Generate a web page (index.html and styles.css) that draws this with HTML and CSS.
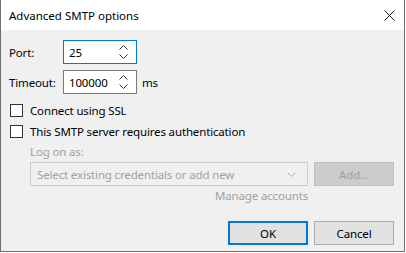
FILE: index.html
```html
<!DOCTYPE html>
<html>
<head>
<meta charset="utf-8">
<link rel="stylesheet" href="styles.css">
</head>
<body>
<div class="window">
  <div class="titlebar">
    <span class="title">Advanced SMTP options</span>
    <svg class="close" width="11" height="11" viewBox="0 0 11 11"><path d="M0.5 0.5 L10.5 10.5 M10.5 0.5 L0.5 10.5" stroke="#1a1a1a" stroke-width="1" fill="none"/></svg>
  </div>
  <div class="content">
    <div class="field-row">
      <span class="field-label">Port:</span>
      <div class="spin focused">
        <span class="spin-value">25</span>
        <span class="spin-arrows">
          <svg width="9" height="5" viewBox="0 0 9 5"><path d="M0.5 4.5 L4.5 0.5 L8.5 4.5" stroke="#333" fill="none"/></svg>
          <svg width="9" height="5" viewBox="0 0 9 5"><path d="M0.5 0.5 L4.5 4.5 L8.5 0.5" stroke="#333" fill="none"/></svg>
        </span>
      </div>
    </div>
    <div class="field-row second">
      <span class="field-label">Timeout:</span>
      <div class="spin">
        <span class="spin-value">100000</span>
        <span class="spin-arrows">
          <svg width="9" height="5" viewBox="0 0 9 5"><path d="M0.5 4.5 L4.5 0.5 L8.5 4.5" stroke="#333" fill="none"/></svg>
          <svg width="9" height="5" viewBox="0 0 9 5"><path d="M0.5 0.5 L4.5 4.5 L8.5 0.5" stroke="#333" fill="none"/></svg>
        </span>
      </div>
      <span class="unit">ms</span>
    </div>
    <label class="check-row first-check"><span class="box"></span><span>Connect using SSL</span></label>
    <label class="check-row"><span class="box"></span><span>This SMTP server requires authentication</span></label>
    <div class="auth">
      <div class="logon">Log on as:</div>
      <div class="combo-row">
        <div class="combo">
          <span>Select existing credentials or add new</span>
          <svg width="9" height="5" viewBox="0 0 9 5"><path d="M0.5 0.5 L4.5 4.5 L8.5 0.5" stroke="#b0b0b0" fill="none"/></svg>
        </div>
        <div class="btn disabled">Add...</div>
      </div>
      <div class="manage">Manage accounts</div>
    </div>
    <div class="actions">
      <div class="btn default">OK</div>
      <div class="btn">Cancel</div>
    </div>
  </div>
</div>
</body>
</html>
```
FILE: styles.css
```css
* { box-sizing: border-box; }
html, body { margin: 0; padding: 0; background: #ffffff; }
body {
  font-family: "Noto Sans", "Open Sans", sans-serif;
  font-size: 11.5px;
  letter-spacing: -0.15px;
  color: #000;
}
.window {
  width: 405px;
  height: 252px;
  border: 1px solid #6f6f6f;
  border-top: none;
  background: #f0f0f0;
  display: flex;
  flex-direction: column;
}
.titlebar {
  height: 30px;
  background: #ffffff;
  display: flex;
  align-items: center;
  justify-content: space-between;
  padding: 0 9px 0 8px;
}
.title { font-size: 11.5px; letter-spacing: 0; color: #000; }
.close { display: block; margin-top: 1px; }
.content {
  padding: 10px 10px 0 8px;
  display: flex;
  flex-direction: column;
  flex: 1;
}
.field-row {
  display: flex;
  align-items: center;
  height: 24px;
}
.field-row.second { margin-top: 6px; height: 24px; }
.field-label { width: 54px; }
.spin {
  width: 74px;
  height: 24px;
  border: 1px solid #7a7a7a;
  background: #fff;
  display: flex;
  align-items: center;
  justify-content: space-between;
  padding: 0 8px 0 5px;
}
.spin.focused { border-color: #0078d7; }
.spin-arrows {
  display: flex;
  flex-direction: column;
  gap: 4px;
}
.spin-arrows svg { display: block; }
.unit { margin-left: 5px; }
.check-row {
  display: flex;
  align-items: center;
  height: 21px;
  padding-left: 1px;
}
.first-check { margin-top: 6px; }
.box {
  width: 13px;
  height: 13px;
  border: 1px solid #333;
  background: #fff;
  margin-right: 7px;
}
.auth {
  padding-left: 21px;
  display: flex;
  flex-direction: column;
}
.logon {
  color: #a0a0a0;
  height: 20px;
  line-height: 20px;
  margin-top: 0;
}
.combo-row {
  display: flex;
  gap: 6px;
  height: 24px;
}
.combo {
  width: 278px;
  height: 24px;
  border: 1px solid #cccccc;
  background: #f0f0f0;
  color: #a0a0a0;
  display: flex;
  align-items: center;
  justify-content: space-between;
  padding: 0 11px 0 6px;
}
.combo svg { display: block; }
.btn {
  width: 80px;
  height: 24px;
  border: 1px solid #adadad;
  background: #e1e1e1;
  display: flex;
  align-items: center;
  justify-content: center;
}
.btn.disabled {
  background: #cccccc;
  border-color: #bfbfbf;
  color: #a0a0a0;
}
.btn.default {
  border: 2px solid #0078d7;
}
.manage {
  width: 278px;
  text-align: right;
  color: #a0a0a0;
  height: 22px;
  line-height: 20px;
}
.actions {
  display: flex;
  justify-content: flex-end;
  gap: 6px;
  margin-top: 13px;
}
```
